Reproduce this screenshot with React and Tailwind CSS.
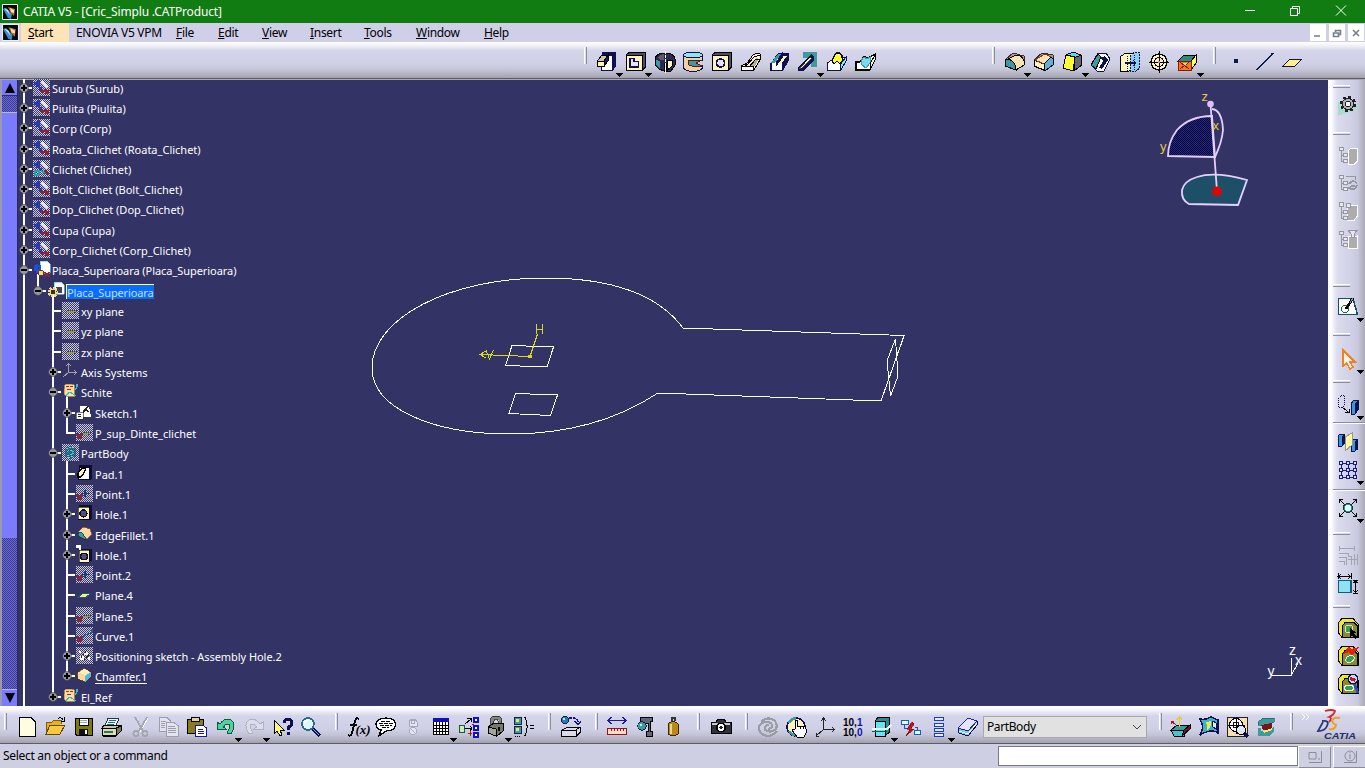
import React from "react";

const N = "#101050";
const C = "#fff3c0";
const T = "#3d9a9e";

/* ---------- toolbar drawings, 22 x 22 grid ---------- */
const art = {
  pad: (
    <>
      <path d="M6 1H20V15L17 20H6Z" fill={N} />
      <path d="M8 5L10 4H16.500V19.500H5V15Z" fill="#fff" stroke={N} />
      <path d="M1.500 10L6 4H12L8 10Z" fill="#cfc89c" stroke="#000" />
      <path d="M1.500 10H8V15.500H1.500Z" fill={C} stroke="#000" />
      <path d="M8 10L12 4V10L8 15Z" fill="#1b1b66" stroke="#000" />
    </>
  ),
  pocket: (
    <>
      <path d="M1 4L4 1.500H20.500V16L17 19.500" fill="#50505c" stroke="#000" />
      <path d="M1.500 4.500H17.500V19.500H1.500Z" fill={C} stroke="#000" strokeWidth="1.400" />
      <path d="M5 7.500H9V10.500H13.500V16H5Z" fill="#e4e4f4" stroke={N} strokeWidth="1.600" />
    </>
  ),
  shaft: (
    <>
      <path d="M1 8Q2 2 11 2Q20 2 21 8V14L17 20H12V12H10V20L5 18L1 14Z" fill="#2a2a50" stroke="#000" />
      <path d="M4 6Q7 3 10 3V9L6 9Z" fill="#5c5c68" />
      <path d="M2 9L6 10V18L2 14Z" fill={T} />
      <path d="M13.500 9H18V15L13.500 19Z" fill={C} stroke="#000" />
      <path d="M11 0V22" stroke="#fff" strokeDasharray="3 1" />
    </>
  ),
  groove: (
    <>
      <path d="M1.500 4V17Q4 20.500 11 20.500T20.500 17V14H10V9H20.500V4Z" fill="#f4cfa0" stroke={N} />
      <ellipse cx="11" cy="4" rx="9.500" ry="2.800" fill="#8fe4f4" stroke={N} />
      <path d="M20 9H9Q6 9 6 12T10 15H20L14 12Z" fill={T} stroke="#5a1a1a" />
    </>
  ),
  hole: (
    <>
      <path d="M1 4L4 1.500H20.500V16L17 19.500" fill="#50505c" stroke="#000" />
      <path d="M1.500 4.500H17.500V19.500H1.500Z" fill={C} stroke="#000" strokeWidth="1.400" />
      <circle cx="9.500" cy="12" r="4" fill="#e4e4f4" stroke={N} strokeWidth="1.700" />
    </>
  ),
  rib: (
    <>
      <path d="M1 15L5 13V15L13 4Q16 2 20 3V9L14 19H1Z" fill={C} stroke="#000" />
      <path d="M9 16L16 7L19 8L14 16Z" fill="#b3ad8d" />
      <path d="M6 15L14 6L20 4M9 16L16 8H20" fill="none" stroke="#000" />
      <path d="M1 15.500H13.500V19.500H1Z" fill="#fff" stroke="#000" />
    </>
  ),
  slot: (
    <>
      <path d="M1 13L9 2H20V9L14 20H1Z" fill={N} />
      <path d="M2 13L9 3L13 2L7 12V15L15 4H19L13 13V19H2Z" fill="#fff" stroke={N} />
      <path d="M2 12L9 3L12 3L6 12Z" fill={T} />
      <path d="M9 13L15 5H18L12 13Z" fill={C} />
    </>
  ),
  stiffener: (
    <>
      <path d="M6 1H20V16H14V7H6Z" fill={T} />
      <path d="M1 17L14 3L17 5V9L6 20H1Z" fill={N} />
      <path d="M2.500 17.500L13 6L15 7L4.500 18Z" fill={C} stroke="#000" strokeWidth=".7" />
    </>
  ),
  loft: (
    <>
      <path d="M1 12L6 9L9 3Q12 0 15 3L17 6H20V10L15 19H1Z" fill="#fff" stroke={N} />
      <path d="M6 10L9 4Q12 0 15 4L17 9L14 13L11 10L8 13Z" fill="#ffff30" stroke="#000" />
      <path d="M14 14L20 6V10L15 19Z" fill="#8fe4f4" stroke={N} />
    </>
  ),
  removeLoft: (
    <>
      <path d="M1 11H5L9 5L13 7L18 4H20V9L15 19H1Z" fill="#fff" stroke="#000" strokeWidth="1.300" />
      <path d="M6 10L9 6L12 8L15 6V12L11 17L7 14Z" fill="#7adcf0" stroke={T} />
      <path d="M15 13L20 4V9L15 19Z" fill={C} stroke="#000" />
    </>
  ),
  fillet: (
    <>
      <path d="M1 9L9 2L20 5V14L12 19L1 15Z" fill="#b49a90" stroke="#3a2a2a" />
      <path d="M4 8L12 4Q18 4 20 10V14L12 19Q12 10 4 8Z" fill="#fbe2b0" stroke="#000" />
      <path d="M1 9Q11 7 12 19L1 15Z" fill={T} stroke="#000" />
    </>
  ),
  chamfer: (
    <>
      <path d="M1 9L9 2L20 4V14L12 20L1 15Z" fill="#a89a94" stroke="#3a2a2a" />
      <path d="M1 9L11 13V19L1 15Z" fill={C} stroke="#000" />
      <path d="M2 9L12 3L18 6L11 13Z" fill="#fbe2b0" stroke="#7a3a2a" />
      <path d="M11 13L18 6L20 8V14L12 20Z" fill="#5ab4dc" stroke="#000" />
    </>
  ),
  draft: (
    <>
      <path d="M12 6L19 4L20 14L12 20Z" fill="#66666e" stroke="#000" />
      <path d="M4 4L11 1L19 4L12 7Z" fill="#5ad8ee" stroke="#000" />
      <path d="M4 4L13 6L11 20L1 17Z" fill="#ffff30" stroke="#000" />
    </>
  ),
  shell: (
    <>
      <path d="M1 14L8 2H16L20 8L14 20H7Z" fill="#fff" stroke={N} />
      <path d="M1 14L8 3L11 6L6 18Z" fill={T} stroke="#000" />
      <path d="M10 7L15 5L18 9L12 18L9 17L13 10Z" fill={N} />
    </>
  ),
  thick: (
    <>
      <path d="M1.500 5.500L6 2.500H13V18L9 20.500H1.500Z" fill={C} stroke="#000" />
      <path d="M11 5L15 1.500H20.500V17L17 20H11Z" fill="#8ed0ee" stroke={N} strokeDasharray="2 1" />
      <path d="M8.500 5V20M15 4V19" stroke={N} strokeDasharray="1 1" />
      <path d="M6 12H17M14 9L17 12L14 15" fill="none" stroke={N} strokeWidth="1.400" />
    </>
  ),
  thread: (
    <>
      <circle cx="11" cy="11" r="8" fill={C} stroke="#000" strokeWidth="1.400" />
      <circle cx="11" cy="11" r="4.500" fill="none" stroke="#000" />
      <path d="M11 0V22M1 11H21" stroke="#000" />
      <circle cx="11" cy="11" r="1.500" fill="#c88" />
    </>
  ),
  replace: (
    <>
      <path d="M1 10L7 4H19L14 10Z" fill="#2d8a7e" stroke="#000" />
      <path d="M14 10L19 4V12L14 19Z" fill="#ffff60" stroke="#000" />
      <path d="M1 10H14V19H1Z" fill="#f07a20" stroke="#8a1a00" />
      <path d="M3 11L12 18M12 11L3 18" stroke="#8a1a00" />
      <path d="M5 12H10L8 14Z" fill="#ffe070" />
    </>
  ),
  point: <path d="M9 8H13V12H9Z" fill="#0a1a4a" />,
  line: <path d="M3 19L19 2" stroke="#0a1a4a" strokeWidth="1.500" />,
  plane: <path d="M1 15L8 8H20L13 15Z" fill="#fff08a" stroke={N} />,

  newDoc: <path d="M3.500 1.500H15L19.500 6V20.500H3.500Z" fill="#fffde0" stroke="#000" />,
  open: (
    <>
      <path d="M2 18V6H8L10 4H17V8" fill="#e8b020" stroke="#806000" />
      <path d="M2 18L6 9H21L16 18Z" fill="#f8ca40" stroke="#604800" />
      <path d="M14 3Q17 0 19 4M20 1V5H17" fill="none" stroke="#000" />
    </>
  ),
  save: (
    <>
      <path d="M2.500 2.500H19.500V19.500H4L2.500 18Z" fill="#7f7a10" stroke="#000" />
      <path d="M6 2.500H15.500V9.500H6Z" fill="#fff" stroke="#000" />
      <path d="M7 4.500H14M7 6.500H14" stroke="#9ab" />
      <path d="M6 13H15V19H6Z" fill="#111" />
      <path d="M12 14H14V18H12Z" fill="#fff" />
    </>
  ),
  print: (
    <>
      <path d="M7 2H18L15 10H4Z" fill="#e8f8ff" stroke="#234" />
      <path d="M8 4.500H15M7 6.500H14M6 8.500H13" stroke="#268" />
      <path d="M1 11L4 9H19L20 10V15L15 20H2Z" fill="#c8c69a" stroke="#000" />
      <path d="M1 12.500H15V19.500H2Z" fill="#dedcb0" stroke="#000" />
      <path d="M3 15H12V17H3Z" fill="#2a7a4a" />
      <path d="M15 12L20 10V15L15 20Z" fill="#7c7a50" stroke="#000" />
    </>
  ),
  cut: (
    <g fill="none" stroke="#a6a6b2" strokeWidth="1.800">
      <path d="M6 2L14 16M18 2L10 16" stroke="#fff" strokeWidth="1" />
      <path d="M5 1L13 15M17 1L9 15" />
      <circle cx="6" cy="17.500" r="2.600" />
      <circle cx="15" cy="17.500" r="2.600" />
    </g>
  ),
  copy: (
    <g fill="#e2e2f0" stroke="#9d9dab">
      <path d="M1.500 1.500H9L12.500 5V15.500H1.500Z" />
      <path d="M3 5.500H8M3 7.500H7M3 9.500H7M3 11.500H7" />
      <path d="M8.500 6.500H16L20.500 10V20.500H8.500Z" />
      <path d="M10 10.500H17M10 12.500H18M10 14.500H18M10 16.500H18" />
    </g>
  ),
  paste: (
    <>
      <path d="M1.500 3.500H17.500V17.500H1.500Z" fill="#8c7a1e" stroke="#000" />
      <path d="M5.500 1.500H13.500V5.500H5.500Z" fill="#ddd7a0" stroke="#000" />
      <path d="M9.500 9.500H17L20.500 12V20.500H9.500Z" fill="#fff" stroke="#1a1a90" />
      <path d="M12 13.500H17M12 15.500H18M12 17.500H18" stroke="#1a1a90" />
    </>
  ),
  undo: <path d="M2 6L5 8Q10 1 16 4Q22 8 16 18L12 17Q17 9 13 8Q10 8 8.500 11L11 13H2Z" fill="#4fd39c" stroke="#0e5a3c" />,
  redo: <path d="M20 6L17 8Q12 1 6 4Q0 8 6 18L10 17Q5 9 9 8Q12 8 13.500 11L11 13H20Z" fill="#dcdcec" stroke="#b0b0c0" />,
  help: (
    <>
      <path d="M2 4V18L5 15L8 20L10 19L8 14H12Z" fill="#ffff70" stroke="#000" />
      <path d="M12 7Q12 3.500 16 3.500T20 7Q20 10 16 11.500V14" fill="none" stroke={N} strokeWidth="3" />
      <path d="M14.500 16H17.500V19H14.500Z" fill={N} />
    </>
  ),
  find: (
    <>
      <path d="M12 12L20 20" stroke={N} strokeWidth="3.400" />
      <path d="M12.500 12.500L19 19" stroke="#6bb8e8" strokeWidth="1.200" />
      <circle cx="8" cy="8" r="6" fill="#dff6ff" stroke="#2a6a8a" strokeWidth="1.600" />
      <path d="M5 7Q6 4 9 4" fill="none" stroke="#fff" strokeWidth="2" />
    </>
  ),
  formula: (
    <>
      <path d="M12 3Q9 1 8 5L5 17Q4 21 1 19M3 9H10" fill="none" stroke="#000" strokeWidth="1.900" />
      <text x="8.500" y="18" fontFamily="Liberation Serif, serif" fontStyle="italic" fontWeight="bold" fontSize="13">(x)</text>
    </>
  ),
  comment: (
    <>
      <path d="M11 2C16 2 20.500 4 20.500 8.500S16 15 11 15L4 20L6 14C3 13 1 11 1 8S5 2 11 2Z" fill="#fff" stroke="#000" strokeWidth="1.300" />
      <path d="M6 5.500H16M4 7.500H18M5 9.500H17M7 11.500H14" stroke="#000" strokeDasharray="4 1" />
    </>
  ),
  lamps: (
    <g fill="#e6e6f2" stroke="#a8a8b8">
      <path d="M9 3H13L15 6V10H7V6Z" />
      <circle cx="11" cy="6" r="2" />
      <circle cx="11" cy="15" r="3.500" />
      <path d="M9 13L13 17" />
    </g>
  ),
  table: (
    <>
      <path d="M3 3H19V19H3Z" fill="#fff" />
      <path d="M3 2H19V6H3Z" fill="#1010c0" />
      <path d="M3.500 6V18.500H18.500V6M3 9.500H19M3 12.500H19M3 15.500H19M6.500 6V19M9.500 6V19M12.500 6V19M15.500 6V19" fill="none" stroke="#000" />
    </>
  ),
  equiv: (
    <>
      <path d="M1.500 9.500H6V16H1.500Z" fill="#c8f0a8" stroke="#155" />
      <g fill="#fff" stroke="#1010c0" strokeWidth="1.300"><path d="M16 2H20V6H16ZM16 10H20V14H16ZM16 17H20V21H16Z" /></g>
      <path d="M7 8L13 3M9 2.500H13.500V6M7 12.500H14M12 10L14 12L12 15" fill="none" stroke="#000" />
      <path d="M10 17.500H14M12 15V20M14 8H16" stroke="#c01010" />
    </>
  ),
  lock: (
    <>
      <path d="M7 9V4Q7 1.500 11 1.500T15 4V9" fill="none" stroke="#85857c" strokeWidth="3" />
      <path d="M5.500 9V4Q6 0 11 0T16.500 4V9M8.500 8V5Q9 3 11 3T13.500 5V8" fill="none" stroke="#222" strokeWidth=".8" />
      <path d="M3 11L9 7H18V15L12 20L3 17Z" fill="#77776a" stroke="#000" />
      <path d="M3 11L11 13V20L3 17Z" fill="#a4a494" stroke="#000" />
      <path d="M14 11V15" stroke="#000" strokeWidth="2" />
    </>
  ),
  relations: (
    <>
      <g stroke="#124" fill={T}><path d="M1.500 1.500H8.500V8.500H1.500ZM1.500 10.500H8.500V17.500H1.500Z" /></g>
      <path d="M3 3H6V6H3ZM3 12H6V15H3Z" fill="#f4e070" />
      <path d="M2 20.500H8" stroke="#000" strokeDasharray="1 1" />
      <path d="M11 1Q13 1 13 4V8L15 11L13 13V17Q13 20 11 20M17 9.500H21M17 12.500H21" fill="none" stroke="#000" />
    </>
  ),
  convert: (
    <>
      <circle cx="5" cy="4" r="3.700" fill="#2a7ab0" stroke="#024" />
      <circle cx="4" cy="3" r="1.200" fill="#bfe8ff" />
      <path d="M9 2H14Q18 2 18 7" fill="none" stroke="#1010a0" strokeWidth="1.400" strokeDasharray="3 1" />
      <path d="M15 5L18 8.500L21 5" fill="none" stroke="#1010a0" strokeWidth="1.400" />
      <path d="M1.500 14.500L7 11.500H20.500V16L16 20.500H1.500Z" fill="#dcdcec" stroke="#000" />
      <path d="M2 14.500H16V20M16 14L20 11" fill="none" stroke="#000" />
    </>
  ),
  measure: (
    <>
      <path d="M2 4.500H20M6 1L2 4.500L6 8M16 1L20 4.500L16 8" fill="none" stroke="#1a1aa0" strokeWidth="1.300" />
      <path d="M1.500 12.500H20.500V18.500H1.500Z" fill="#ffd8c8" stroke="#8a1a1a" />
      <path d="M5.500 12V15M8.500 12V15M11.500 12V15M14.500 12V15M17.500 12V15" stroke="#8a1a1a" />
    </>
  ),
  clamp: (
    <>
      <path d="M6 1.500H18.500V5H16V15H18.500V20.500H12V15H14V7H6Z" fill="#66667a" stroke="#000" />
      <circle cx="8" cy="10" r="4.200" fill={T} stroke="#023" />
      <circle cx="7" cy="9" r="1.500" fill="#cfe" />
    </>
  ),
  mass: (
    <>
      <path d="M9.500 5V1.500H12.500V5" fill="none" stroke="#333" strokeWidth="2" />
      <path d="M6 8Q11 3 16 8V18Q11 22 6 18Z" fill="#b88a1e" stroke="#3a2a00" />
      <path d="M8.500 8V18" stroke="#f2d878" strokeWidth="2" />
    </>
  ),
  camera: (
    <>
      <path d="M1 6H6L8 3H14L16 6H21V17H1Z" fill="#30303c" stroke="#000" />
      <path d="M2 7H20V9H2Z" fill="#c8c8d0" />
      <circle cx="11" cy="11.500" r="4.200" fill="#fff" stroke="#000" strokeWidth="1.500" />
      <circle cx="11" cy="11.500" r="1.800" fill="#223" />
    </>
  ),
  swirl: (
    <g fill="none" stroke="#9c9ca4" strokeWidth="2.200">
      <path d="M4 6Q10 0 17 4Q22 9 18 14Q13 17 8 14Q7 9 12 9" />
      <path d="M20 15Q13 23 5 18Q-1 12 4 8Q9 4 14 7Q17 12 11 13" />
    </g>
  ),
  hand: (
    <>
      <circle cx="10" cy="11" r="9" fill="#fff4b8" stroke={N} strokeWidth="1.600" />
      <path d="M3 7Q6 2 10 2.500M3 15Q6 19 10 19.500" fill="none" stroke={T} strokeWidth="2.600" />
      <path d="M9 13V4H11.500V10H18Q20 10 20 13V17L18 21H11L6 14Z" fill="#fff" stroke="#000" />
      <path d="M14.500 10V13M17.500 10V13" stroke="#000" />
    </>
  ),
  axis: <path d="M9.500 2V13.500H20M9.500 13.500L2 20M7 5L9.500 2L12 5M18 11L20.500 13.500L18 16M2 17V20.500H5" fill="none" stroke="#222" />,
  dims: (
    <g fontFamily="Liberation Sans, sans-serif" fontSize="10" fontWeight="bold">
      <text x="0" y="9.500" fill="#000">10,<tspan fill="#1010b0">1</tspan></text>
      <text x="0" y="20" fill="#000">10,<tspan fill="#1010b0">0</tspan></text>
    </g>
  ),
  section: (
    <>
      <path d="M4 5L7 1.500H18.500V16L14 20H4Z" fill="#2a8a90" stroke="#000" />
      <path d="M4 5.500H14.500V20.500H4Z" fill="#6ae2f2" stroke="#000" />
      <path d="M1 13H16L20 9" fill="none" stroke="#e8ffff" strokeWidth="2" />
      <path d="M1 15.500H16" stroke="#156" />
    </>
  ),
  update: (
    <>
      <path d="M1.500 4H8V8H1.500ZM14 14H20.500V18H14Z" fill="#dff" stroke="#1a5ac0" />
      <path d="M4.500 8V12H8M17.500 14V11.500H15" fill="none" stroke="#1a5ac0" />
      <path d="M12 6L7 13H10L6 20L14 13H11L14 8Z" fill="#d01010" stroke="#600" strokeWidth=".6" />
    </>
  ),
  stack: <path d="M6.500 1.500H15.500V4.500H6.500ZM6.500 7.500H15.500V10.500H6.500ZM6.500 12.500H15.500V15.500H6.500ZM6.500 17.500H15.500V20.500H6.500Z" fill="#e4ecff" stroke="#1a3ac0" />,
  book: (
    <>
      <path d="M1 13L11 2L20 5V9L11 20L2 17Z" fill="#7cc8ee" stroke={N} />
      <path d="M1 12L11 2L20 5L11 15Z" fill="#e4e4fa" stroke="#1a2a90" />
      <path d="M2 15L11 18L20 7" fill="none" stroke="#fff" />
    </>
  ),
  sketchPos: (
    <>
      <path d="M1 14L7 9H20L14 14Z" fill={T} stroke="#000" />
      <path d="M1 14.500H14V20H4Z" fill="#48c4d0" stroke="#000" />
      <path d="M14 14L20 9V13L12 20Z" fill="#7a1020" stroke="#000" />
      <path d="M9.500 11V1M7 4L9.500 1L12 4" fill="none" stroke="#e0d020" strokeWidth="1.400" />
      <path d="M6 9L1 5M1.500 8V5H4" fill="none" stroke="#b01010" />
    </>
  ),
  surface: (
    <>
      <path d="M2 3Q9 4 13 1L20 4V17Q14 12 2 19Q7 11 2 3Z" fill="#3ab4c8" stroke={N} strokeWidth="1.400" />
      <path d="M8 6Q12 6 13 4Q14 10 9 15Q10 10 8 6Z" fill="#eee850" />
      <path d="M15 5L18 7V13Q15 11 14 10Z" fill="#c8f4ff" stroke={N} />
    </>
  ),
  target: (
    <>
      <path d="M.5 1.500H20.500V20.500H.5Z" fill="#f8dfb0" stroke="#222" />
      <circle cx="9" cy="9" r="6.500" fill="#fff" stroke="#000" />
      <circle cx="9" cy="9" r="3" fill="none" stroke={N} />
      <path d="M9 1V18M1 9H18" stroke="#000" />
      <path d="M17 17L21 21" stroke={N} strokeWidth="3" />
      <circle cx="14" cy="14" r="4.500" fill="#dfe8f4" stroke="#000" />
    </>
  ),
  beam: (
    <>
      <path d="M3 6L8 2H19V6L14 9H3Z" fill={T} stroke="#155" strokeWidth=".6" />
      <path d="M6 9L17 7V13L8 14Z" fill="#7a1418" />
      <path d="M3 12H6V15L15 14L19 11V15L14 20H3Z" fill={T} />
      <path d="M8 15L17 12V14L9 17Z" fill="#f6ee60" />
    </>
  ),

  gear: (
    <>
      <path d="M1 8L10 6L23 14L1 22Z" fill="#a9dccb" />
      <circle cx="11" cy="10" r="7" fill="none" stroke="#222" strokeWidth="2.500" strokeDasharray="3 2.500" />
      <circle cx="11" cy="10" r="5.700" fill="#b4b4b4" stroke="#222" />
      <circle cx="11" cy="10" r="2.700" fill="#f4f4f8" stroke="#222" />
    </>
  ),
  grayTree: (
    <>
      <path d="M11 7L14 4H20.500V17L17 20.500H11Z" fill="#adadad" stroke="#fff" />
      <path d="M2.500 3.500H6.500V6.500H2.500ZM6.500 9.500H10.500V12.500H6.500ZM6.500 15.500H10.500V18.500H6.500Z" fill="#e8e8f4" stroke="#96969e" />
      <path d="M4.500 6V17H6M4.500 11H6" fill="none" stroke="#96969e" />
    </>
  ),
  grayTree2: (
    <>
      <path d="M2.500 3.500H6.500V6.500H2.500ZM6.500 9.500H10.500V12.500H6.500ZM6.500 15.500H10.500V18.500H6.500Z" fill="#e8e8f4" stroke="#96969e" />
      <path d="M4.500 6V17H6M4.500 11H6M9 4.500H18V8" fill="none" stroke="#96969e" />
      <path d="M12 12Q15 7 20 11M20 13Q18 20 12 16L15 14L18 14" fill="none" stroke="#96969e" strokeWidth="1.800" />
    </>
  ),
  grayTree3: (
    <>
      <path d="M10 9L13 5H20.500V16L17 20.500H10Z" fill="#adadad" stroke="#fff" />
      <path d="M2.500 2.500H6.500V6.500H2.500ZM9.500 3.500H13.500V7.500H9.500ZM6.500 10.500H10.500V13.500H6.500ZM6.500 16.500H10.500V19.500H6.500Z" fill="#e8e8f4" stroke="#96969e" />
      <path d="M4.500 6V18H6M4.500 12H6" fill="none" stroke="#96969e" />
    </>
  ),
  grayTree4: (
    <>
      <path d="M11 9V20.500H20.500V8Z" fill="#adadad" stroke="#fff" />
      <path d="M11 2H20.500L17 6V9H14V6Z" fill="#e8e8f4" stroke="#96969e" />
      <path d="M2.500 3.500H6.500V6.500H2.500ZM6.500 9.500H10.500V12.500H6.500ZM6.500 15.500H10.500V18.500H6.500Z" fill="#e8e8f4" stroke="#96969e" />
      <path d="M4.500 6V17H6M4.500 11H6" fill="none" stroke="#96969e" />
    </>
  ),
  sketch: (
    <>
      <path d="M1.500 2.500H16L20.500 18.500H1.500Z" fill="#fff" stroke="#15506a" strokeWidth="1.500" />
      <circle cx="8" cy="13" r="3.500" fill="none" stroke="#1a6a4a" />
      <path d="M9 13L16 2" stroke="#000" strokeWidth="2.600" />
      <path d="M13 7L16 2" stroke="#79a" strokeWidth="1" />
    </>
  ),
  arrow: <path d="M6 2V18L9.500 15L13 21L16 19L13 14H18Z" fill="#fbf0ea" stroke="#f08020" strokeWidth="1.600" />,
  translate: (
    <>
      <path d="M1.500 4.500L4 1.500H7.500V11L5 13.500H1.500Z" fill="none" stroke={N} strokeDasharray="1 1" />
      <path d="M6 14L11 17.500M8 18.500H12V15" fill="none" stroke="#000" />
      <path d="M14.500 9L17 6H21V16L18 20H14.500Z" fill="#3a9ad8" stroke={N} />
      <path d="M18 9L21 6V16L18 20Z" fill={N} />
    </>
  ),
  mirror: (
    <>
      <path d="M1.500 5L3 3H7V13L5 15H1.500Z" fill="#3a9ad8" stroke={N} />
      <path d="M5 5L7 3V13L5 15Z" fill={N} />
      <path d="M14.500 10L16 8H20.500V18L18 20H14.500Z" fill="#3a9ad8" stroke={N} />
      <path d="M8 6L15 2V14L8 20Z" fill="#fbf8a8" stroke="#998" />
      <path d="M18 10L20.500 8V18L18 20Z" fill={N} />
    </>
  ),
  grid: (
    <>
      <path d="M3 4H19M3 11H19M3 18H19M4 3V19M11 3V19M18 3V19" stroke="#1a1a90" />
      <g fill="#dfe2ff" stroke="#1a1a90">
        {[4, 11, 18].map((y) => [4, 11, 18].map((x) => <circle key={x + "-" + y} cx={x} cy={y} r="1.800" />))}
      </g>
    </>
  ),
  scale: (
    <>
      <path d="M3 3L7 7M19 3L15 7M3 19L7 15M19 19L15 15M2.500 6V2.500H6M16 2.500H19.500V6M2.500 16V19.500H6M16 19.500H19.500V16" fill="none" stroke="#000" />
      <circle cx="11" cy="11" r="4.700" fill="#3a8a8a" stroke="#0a3a3a" />
      <circle cx="11" cy="11" r="3" fill="#dffcf0" />
    </>
  ),
  grayDims: <path d="M2 3.500H17M2.500 1V6M17.500 1V6M2 8.500H11.500V11.500H14.500V20M2 12.500H9.500V20M2 16.500H7.500V20M11 14.500H20M17.500 9V20M20.500 9V20" fill="none" stroke="#a4a4ae" />,
  dimBox: (
    <>
      <path d="M1.500 7.500H14V19.500H1.500Z" fill="#8ae4f4" stroke="#155a7a" strokeWidth="1.500" />
      <path d="M1 3.500H14M1.500 0V6M14.500 0V6M4 1.500L1 3.500L4 5.500M11 1.500L14 3.500L11 5.500M18.500 7V20M16 7.500H21M16 20.500H21M16.500 10L18.500 7.500L20.500 10M16.500 17L18.500 20L20.500 17" fill="none" stroke="#000" />
    </>
  ),
  blockCursor: (
    <>
      <path d="M1 6L5 1.500H16L21 7V20.500H5L1 15Z" fill="#f0e820" stroke="#000" />
      <path d="M5.500 9L8 5.500H17L20.500 9V20H5.500Z" fill="#8c8a26" stroke="#000" />
      <circle cx="12" cy="12" r="4" fill="#3a9a5a" stroke="#cfe8cf" />
      <path d="M13 11V20L15 18L18 22L20 20L17 16H20Z" fill="#000" />
    </>
  ),
  blockFlash: (
    <>
      <path d="M1 6L5 1.500H16L21 7V20.500H5L1 15Z" fill="#f0e820" stroke="#000" />
      <path d="M5.500 9L8 5.500H17L20.500 9V20H5.500Z" fill="#8c8a26" stroke="#000" />
      <ellipse cx="13" cy="14" rx="4.500" ry="3.300" fill="#3a9a5a" stroke="#dfe" transform="rotate(-35 13 14)" />
      <path d="M6 9L12 1L14 4L22 2L15 11L12 7Z" fill="#e81c10" />
    </>
  ),
  blockFind: (
    <>
      <path d="M1 6L5 1.500H16L21 7V20.500H5L1 15Z" fill="#f0e820" stroke="#000" />
      <path d="M5.500 9L8 5.500H17L20.500 9V20H5.500Z" fill="#8c8a26" stroke="#000" />
      <ellipse cx="12" cy="15" rx="4.500" ry="3" fill="#3a9a5a" stroke="#dfe" />
      <path d="M17 10L21 20" stroke="#2a4ac0" strokeWidth="2.500" />
      <circle cx="16" cy="6" r="4.500" fill="#c8d8f8" stroke={N} strokeWidth="1.500" />
      <path d="M13 4L19 6L18 9L13 7Z" fill="#c01818" />
    </>
  ),
};

function Icon({ name, menu }) {
  return (
    <svg viewBox="0 0 22 22" className="h-[22px] w-[22px] shrink-0 overflow-visible" fill="#000" shapeRendering="crispEdges">
      {art[name]}
      {menu && <path d="M20 22H27L23.500 26Z" fill="#000" />}
    </svg>
  );
}

function Group({ items, className }) {
  return (
    <div className={"flex shrink-0 items-center justify-between " + className}>
      {items.map((n) => (
        <Icon key={n} name={n.replace("*", "")} menu={n.endsWith("*")} />
      ))}
    </div>
  );
}

const Grip = ({ className }) => (
  <div className={"mb-3 h-[17px] w-[3px] shrink-0 border-r border-l border-l-white border-r-[#8c8c9c] bg-[#dcdcec] " + className} />
);

const HGrip = ({ className }) => (
  <div className={"ml-[5px] h-[3px] w-[17px] shrink-0 border-t border-b border-t-white border-b-[#8c8c9c] " + className} />
);

const Logo = ({ className }) => (
  <svg viewBox="0 0 16 16" className={"shrink-0 " + className}>
    <path d="M.5 .5H15.500V15.500H.5Z" fill="#06080e" stroke="#e8f0e8" />
    <path d="M1 5L4 4L10 10L9 15L6 14Z" fill="#3a8ecc" />
    <path d="M2 4L6 6L8 11Z" fill="#bfe6ff" />
    <path d="M6 3L13 5L12 12L9 9Z" fill="#c8682a" />
    <path d="M8 4L12 6V9L9 8Z" fill="#ffe6c0" />
  </svg>
);

/* ---------- specification tree ---------- */
const treeArt = {
  part: (
    <>
      <path d="M0 0H17V17H0Z" fill="url(#hatch)" />
      <path d="M9 1L15 7L13 9L8 4Z" fill="#fff" fillOpacity=".8" />
      <path d="M1 3H4V1H7V8H3V6H1ZM6 8H9V12H6Z" fill="#1c2ca8" fillOpacity=".85" />
      <path d="M8 11L11 14M12 11L16 15M16 11L12 15" stroke="#8c2236" strokeWidth="1.500" />
    </>
  ),
  partGreen: (
    <>
      <path d="M0 0H17V17H0Z" fill="url(#hatch)" />
      <path d="M9 1L15 7L13 9L8 4Z" fill="#fff" fillOpacity=".8" />
      <path d="M1 3H4V1H7V8H3V6H1ZM6 8H9V11H6Z" fill="#1c2ca8" fillOpacity=".85" />
      <path d="M2 11H6V15H2ZM8 11L12 13" fill="none" stroke="#2aa0a0" strokeWidth="1.500" />
      <path d="M12 11L16 15" stroke="#8c2236" strokeWidth="1.500" />
    </>
  ),
  partOpen: (
    <>
      <path d="M7 0H14L17 3V12H7Z" fill="#fff" stroke="#6ad0d8" strokeWidth=".7" />
      <path d="M2 5H7V9H2ZM4 3V12" fill="none" stroke="#2050d0" strokeWidth="1.600" />
      <circle cx="8" cy="12" r="2.600" fill="#f4d890" stroke="#6a3a10" />
      <path d="M12 11L16 16M16 11L12 16" stroke="#a02030" strokeWidth="1.600" />
    </>
  ),
  gearDoc: (
    <>
      <path d="M6 0H13L16 3V12H6Z" fill="#fff" stroke="#6ad0d8" strokeWidth=".7" />
      <path d="M8 5H14V11H8Z" fill="#445" />
      <circle cx="5" cy="10" r="4" fill="none" stroke="#f4d890" strokeWidth="2.400" strokeDasharray="2 1" />
      <circle cx="5" cy="10" r="2.600" fill="#332" stroke="#f4d890" />
    </>
  ),
  plane: (
    <>
      <path d="M0 0H17V17H0Z" fill="url(#hatch)" />
      <path d="M3 11L6 8H15L12 11Z" fill="#9c9a4a" fillOpacity=".7" stroke="#3a3a50" strokeDasharray="1 1" />
    </>
  ),
  planeX: (
    <>
      <path d="M0 0H17V17H0Z" fill="url(#hatch)" />
      <path d="M5 11L8 8H15L12 11Z" fill="#9c9a4a" fillOpacity=".7" stroke="#3a3a50" strokeDasharray="1 1" />
      <path d="M1 10L6 15M6 10L1 15" stroke="#8c2236" strokeWidth="1.500" />
    </>
  ),
  pointX: (
    <>
      <path d="M0 0H17V17H0Z" fill="url(#hatch)" />
      <path d="M9 5V12M6 8.500H13" stroke="#1a3a7a" strokeWidth="1.500" />
      <path d="M1 10L6 15M6 10L1 15" stroke="#8c2236" strokeWidth="1.500" />
    </>
  ),
  curve: (
    <>
      <path d="M0 0H17V17H0Z" fill="url(#hatch)" />
      <path d="M6 14Q7 8 12 7T16 2" fill="none" stroke="#2a5a90" strokeWidth="1.300" />
      <path d="M1 10L6 15M6 10L1 15" stroke="#8c2236" strokeWidth="1.500" />
    </>
  ),
  axis: <path d="M6.500 1V9.500H14M6.500 9.500L1 14M4 3L6.500 1L9 3M12 7L14.500 9.500L12 12" fill="none" stroke="#a8a0a8" />,
  set: (
    <>
      <path d="M3 2Q7 0 12 2V8L13 13H4L2 11Z" fill="#fbdf9c" stroke="#c8964a" strokeWidth=".8" />
      <path d="M4 3.500H7M8 3.500H11M5 6.500H9" stroke="#c02020" />
      <path d="M3 13L8 9L14 13M15 1V4L13 7" fill="none" stroke="#38b8d0" strokeWidth="1.300" />
    </>
  ),
  sketch: (
    <>
      <path d="M4 2H13L15 13H4Z" fill="#fff" />
      <path d="M7 9L12 2M7 7Q10 4 12 8" stroke="#222" strokeWidth="1.500" fill="none" />
      <path d="M0 8H7V15H0Z" fill="#fff" stroke="#222" strokeWidth=".6" />
      <path d="M2 10.500H5M2 12.500H5" stroke="#222" />
    </>
  ),
  body: (
    <>
      <path d="M0 0H17V17H0Z" fill="url(#hatch)" />
      <path d="M3 4L8 2L14 5V12L9 15L3 12Z" fill="#1a5a7a" fillOpacity=".75" />
      <path d="M4 5Q8 2 13 5M5 8Q8 5 12 8M5 12L12 9M6 14L12 12" fill="none" stroke="#4ad8d8" strokeDasharray="2 1" />
    </>
  ),
  pad: (
    <>
      <path d="M3 0H16V13L14 15H2Z" fill="#0c0c34" />
      <path d="M4 3H13V14H3Z" fill="#fff" />
      <path d="M2 8L6 3H10L8 8L5 12H2Z" fill={C} stroke="#000" strokeWidth="1.300" />
    </>
  ),
  hole: (
    <>
      <path d="M3 0H16V13L14 15H2Z" fill="#10102c" />
      <path d="M2 2H13V14H2Z" fill={C} stroke="#000" strokeWidth=".6" />
      <circle cx="7.500" cy="8.500" r="3.500" fill="#50507a" stroke="#10102c" strokeWidth="1.400" />
    </>
  ),
  holeSub: (
    <>
      <path d="M3 3H16V15H3Z" fill="#10102c" />
      <path d="M3 4H13V16H3Z" fill={C} stroke="#000" strokeWidth=".6" />
      <circle cx="8" cy="10.500" r="3.300" fill="#50507a" stroke="#10102c" strokeWidth="1.400" />
      <path d="M0 -1H5V4H3V2H0Z" fill="#fff" />
    </>
  ),
  fillet: (
    <>
      <path d="M2 6L7 1L14 3L16 8L11 13Z" fill="#fbd8a0" stroke="#a04a20" strokeWidth=".8" />
      <path d="M2 6Q8 5 10 14L2 10Z" fill={T} stroke="#023" strokeWidth=".6" />
    </>
  ),
  planeOn: <path d="M2 11.500L7 7H15L10 11.500Z" fill="#f8f080" stroke="#1a5a6a" />,
  posSketch: (
    <>
      <path d="M0 0H17V17H0Z" fill="url(#hatch)" />
      <path d="M3 4H5V6H3ZM8 5H12V8H8ZM4 9H8V13H4ZM12 10H14V13H12Z" fill="#fff" />
      <path d="M5 11L10 4M8 13L14 6" stroke="#222" strokeDasharray="2 1" />
    </>
  ),
  chamfer: (
    <>
      <path d="M1 6L8 1L15 5V10L9 15L2 12Z" fill="#fbd8a0" stroke="#503010" strokeWidth=".8" />
      <path d="M9 9L15 5V10L9 15Z" fill="#5ab4dc" />
      <path d="M3 6L8 2L14 5L9 8Z" fill="#fff0c0" />
    </>
  ),
};

// guides: one character per level. | passes through, T branches, L ends a branch,
// + and - are nodes (p and m when the branch ends there), . is empty.
const tree = [
  ["+", "part", "Surub (Surub)"],
  ["+", "part", "Piulita (Piulita)"],
  ["+", "part", "Corp (Corp)", "", "tall"],
  ["+", "part", "Roata_Clichet (Roata_Clichet)"],
  ["+", "partGreen", "Clichet (Clichet)"],
  ["+", "part", "Bolt_Clichet (Bolt_Clichet)"],
  ["+", "part", "Dop_Clichet (Dop_Clichet)", "", "tall"],
  ["+", "part", "Cupa (Cupa)"],
  ["+", "part", "Corp_Clichet (Corp_Clichet)"],
  ["-", "partOpen", "Placa_Superioara (Placa_Superioara)", "", "tall"],
  ["|m", "gearDoc", "Placa_Superioara", "sel"],
  ["|.T", "plane", "xy plane"],
  ["|.T", "plane", "yz plane", "", "tall"],
  ["|.T", "plane", "zx plane"],
  ["|.+", "axis", "Axis Systems"],
  ["|.-", "set", "Schite", "", "tall"],
  ["|.|+", "sketch", "Sketch.1"],
  ["|.|L", "planeX", "P_sup_Dinte_clichet"],
  ["|.-", "body", "PartBody", "", "tall"],
  ["|.|T", "pad", "Pad.1"],
  ["|.|T", "pointX", "Point.1"],
  ["|.|+", "hole", "Hole.1", "", "tall"],
  ["|.|+", "fillet", "EdgeFillet.1"],
  ["|.|+", "holeSub", "Hole.1"],
  ["|.|T", "pointX", "Point.2"],
  ["|.|T", "planeOn", "Plane.4", "", "tall"],
  ["|.|T", "planeX", "Plane.5"],
  ["|.|T", "curve", "Curve.1"],
  ["|.|+", "posSketch", "Positioning sketch - Assembly Hole.2"],
  ["|.|p", "chamfer", "Chamfer.1", "active", "tall"],
  ["|.p", "set", "El_Ref"],
];

function Guide({ kind, wide }) {
  const half = "Lpm".includes(kind);
  const line = kind !== ".";
  const tick = "TL+-pm".includes(kind);
  const node = "+-pm".includes(kind);
  const plus = "+p".includes(kind);
  return (
    <svg viewBox="0 0 14 20" className={"h-5 shrink-0 overflow-visible " + (wide ? "mr-px w-[14px]" : "w-[14px]")}>
      {line && <path d={half ? "M7 0V10" : "M7 0V21"} stroke="#fff" strokeWidth="2" />}
      {tick && <path d="M7 9H15" stroke="#fff" strokeWidth="2" />}
      {node && <circle cx="7" cy="9" r="4.400" fill="#96969e" stroke="#3a3a44" strokeWidth=".6" />}
      {node && <path d={plus ? "M4 9H10M7 6V12" : "M4 9H10"} stroke="#000" strokeWidth="2" />}
    </svg>
  );
}

function TreeRow({ row }) {
  const [guides, icon, label, mode, size] = row;
  const opens = "-m".includes(guides[guides.length - 1]);
  return (
    <div className={"flex shrink-0 items-start " + (size === "tall" ? "h-[21px]" : "h-[20px]")}>
      {guides.split("").map((g, i) => (
        <Guide key={i} kind={g} wide={i === 1} />
      ))}
      <svg viewBox="0 0 17 17" className="mr-[2px] ml-[2px] h-[17px] w-[17px] shrink-0 overflow-visible" shapeRendering="crispEdges">
        {opens && <path d="M5 13V21" stroke="#fff" strokeWidth="2" />}
        {treeArt[icon]}
      </svg>
      {mode === "sel" ? (
        <span className="mt-[2px] -ml-px h-[15px] border-t border-l border-white bg-[#0a6cff] leading-[15px] tracking-[-0.120px] text-[#bfe0ff]">{label}</span>
      ) : mode === "active" ? (
        <span className="mt-[2px] h-[15px] border-b border-white leading-[16px]">{label}</span>
      ) : (
        <span className={"leading-[20px] " + (label.length > 30 ? "tracking-[-0.060px]" : "")}>{label}</span>
      )}
    </div>
  );
}

const hatchBg =
  "bg-[conic-gradient(#6a6ae0_25%,#3c3c86_0_50%,#6a6ae0_0_75%,#3c3c86_0)] bg-[length:2px_2px]";

const barBg =
  "bg-[linear-gradient(to_bottom,#fff_0,#f4f4fa_3px,#d4d4ea_9px,#cfcfe6_22px,#c4c4d8_28px,#a2a2ae_36px)]";

const menu = [
  ["w-[42px]", "F", "ile"],
  ["w-[44px]", "E", "dit"],
  ["w-[48px]", "V", "iew"],
  ["w-[54px]", "I", "nsert"],
  ["w-[52px]", "T", "ools"],
  ["w-[68px]", "W", "indow"],
  ["w-[60px]", "H", "elp"],
];

function Scene() {
  return (
    <svg viewBox="320 80 1008 626" className="h-[626px] min-w-0 flex-1" fill="none" fontFamily="Liberation Sans, sans-serif">
      <g stroke="#fff" strokeWidth="1" shapeRendering="crispEdges">
        <path d="M683 328C660 297 615 278 545 278C450 278 372 318 372 368C372 408 432 434 510 434C570 434 620 418 658 393L881 401L904 335.500Z" />
        <path d="M512 345.500L553.500 347L547 367L505.500 365.500ZM515.500 393.500L557.500 395L550.500 415.500L509 413.500Z" />
        <path d="M895.500 339L887 361L890.500 396L898 376ZM904 336L887 384" />
      </g>
      <g stroke="#d8d820" shapeRendering="crispEdges">
        <path d="M480 354.500L530 356.500L537.500 334M486 351L480 354.500L486 358M486 350L489.500 359L493.500 350M536.500 324V334M542.500 324V334M536.500 329H542.500" />
        <path d="M528 355H532V358H528Z" fill="#d8d820" stroke="none" />
      </g>
      <path d="M1212 116Q1190 116 1177 130Q1168 142 1168 156L1215 157Z" fill="url(#navyHatch)" stroke="#e6d0ff" strokeWidth="1.800" />
      <path d="M1212 109Q1222 110 1223 130Q1222 142 1215 157" stroke="#e6d0ff" strokeWidth="1.800" />
      <path d="M1182 190Q1184 181 1197 177Q1215 171 1247 180L1238 205L1189 204Q1181 200 1182 190Z" fill="#1d4f68" stroke="#e6d0ff" strokeWidth="1.800" />
      <path d="M1210.500 104L1217 191" stroke="#e6d0ff" strokeWidth="1.800" />
      <circle cx="1210.500" cy="104" r="3.300" fill="#e0c0ff" />
      <path d="M1213 188H1221V195H1213Z" fill="#d80808" />
      <circle cx="1217" cy="191.500" r="5" fill="#d80808" />
      <g fill="#e8c840" fontSize="13">
        <text x="1201.500" y="101">z</text>
        <text x="1160" y="151">y</text>
        <text x="1212.500" y="130" fontSize="13">x</text>
      </g>
      <path d="M1291.500 658V675.500H1272M1291.500 675L1298 663" stroke="#fff" shapeRendering="crispEdges" />
      <g fill="#fff" fontSize="14">
        <text x="1289" y="655">z</text>
        <text x="1295" y="665">x</text>
        <text x="1267.500" y="676">y</text>
      </g>
    </svg>
  );
}

function StatusButton({ children }) {
  return (
    <div className="flex h-[21px] w-[32px] shrink-0 items-center justify-center border-t border-l border-white bg-[#cfcfe4] shadow-[1px_1px_0_#8a8a98]">
      <svg viewBox="0 0 16 14" className="h-[14px] w-4" fill="none" stroke="#8c8c9a">
        {children}
      </svg>
    </div>
  );
}

export default function App() {
  return (
    <div className="flex h-[779px] w-[1365px] flex-col overflow-hidden bg-white font-['Noto_Sans','Open_Sans',sans-serif] text-black">
      <svg className="absolute h-0 w-0">
        <defs>
          <pattern id="hatch" width="2" height="2" patternUnits="userSpaceOnUse">
            <path d="M0 0H2V2H0Z" fill="#3c3c6c" />
            <path d="M0 0H1V1H0ZM1 1H2V2H1Z" fill="#c8c8d8" />
          </pattern>
          <pattern id="navyHatch" width="2" height="2" patternUnits="userSpaceOnUse">
            <path d="M0 0H2V2H0Z" fill="#2c2c60" />
            <path d="M0 0H1V1H0ZM1 1H2V2H1Z" fill="#000058" />
          </pattern>
        </defs>
      </svg>

      <header className="flex h-[23px] shrink-0 items-center bg-[#117c11] pl-[2px] text-white">
        <Logo className="h-4 w-4" />
        <h1 className="ml-[5px] text-[12px] tracking-[-0.160px] whitespace-nowrap">CATIA V5 - [Cric_Simplu .CATProduct]</h1>
        <svg viewBox="1240 0 125 23" className="ml-auto h-[23px] w-[125px]" fill="none" stroke="#fff">
          <path d="M1245 10.500H1255M1290.500 8.500H1297.500V15.500H1290.500ZM1292.500 8V6.500H1299.500V13.500H1298M1336 5.500L1346 15.500M1346 5.500L1336 15.500" />
        </svg>
      </header>

      <nav className="flex h-[19px] shrink-0 items-center bg-[#cfcfe7] pl-px text-[12px] leading-[19px]">
        <Logo className="h-[17px] w-[19px]" />
        <div className="ml-px h-full w-[48px] bg-[#fde3b5] pl-[7px] tracking-[-0.400px]">
          <u>S</u>tart
        </div>
        <div className="w-[107px] pl-[7px] tracking-[-0.300px] whitespace-nowrap">ENOVIA V5 VPM</div>
        {menu.map(([w, a, b]) => (
          <div key={b} className={"tracking-[-0.300px] " + w}>
            <u>{a}</u>
            {b}
          </div>
        ))}
        <svg viewBox="1309 23 56 19" className="ml-auto h-[19px] w-14" fill="none">
          <path d="M1310 24H1326V41H1310ZM1329 24H1345V41H1329ZM1348 24H1364V41H1348Z" fill="#fff" />
          <path d="M1314 36H1320M1333.500 33H1338.500V36.500H1333.500ZM1335.500 32V30.500H1340.500V34.500H1339M1353 30L1359 36M1359 30L1353 36" stroke="#72808e" strokeWidth="1.600" />
        </svg>
      </nav>

      <div className={"flex h-9 shrink-0 items-center pt-[3px] " + barBg}>
        <Grip className="ml-[584px]" />
        <Group className="ml-[9px] w-[281px]" items={["pad*", "pocket*", "shaft", "groove", "hole", "rib", "slot", "stiffener*", "loft", "removeLoft"]} />
        <Grip className="ml-[115px]" />
        <Group className="ml-[9px] w-[195px]" items={["fillet*", "chamfer", "draft*", "shell", "thick", "thread", "replace*"]} />
        <Grip className="ml-[14px]" />
        <Group className="ml-[9px] w-[79px]" items={["point", "line", "plane"]} />
      </div>
      <div className="h-[2px] shrink-0 border-t border-[#5c5c66] bg-[#a8a8b4]" />

      <main className="flex h-[626px] shrink-0 bg-[#333366]">
        <div className="flex w-[18px] shrink-0 flex-col border-r border-l-2 border-l-[#9a9aa8] border-r-[#2a2a58]">
          <div className="flex h-4 items-center justify-center border-b border-[#2c2c70] bg-[#7b7bff]">
            <svg viewBox="0 0 10 10" className="size-[10px]"><path d="M5 0L10 10H0Z" /></svg>
          </div>
          <div className={"h-4 " + hatchBg} />
          <div className="flex-1 border-t border-[#b8b8ff] bg-[#7b7bff]" />
          <div className={"h-[151px] " + hatchBg} />
          <div className="flex h-[17px] items-center justify-center border-t border-[#b8b8ff] bg-[#7b7bff]">
            <svg viewBox="0 0 10 10" className="size-[10px]"><path d="M5 10L10 0H0Z" /></svg>
          </div>
        </div>
        <div className="-mt-px -ml-px flex h-[627px] w-[303px] shrink-0 flex-col overflow-hidden text-[11px] whitespace-nowrap text-white">
          {tree.map((row, i) => (
            <TreeRow key={i} row={row} />
          ))}
          <div className="ml-[6px] h-4 w-[2px] shrink-0 bg-white" />
        </div>
        <Scene />
        <aside className="flex w-[37px] shrink-0 flex-col bg-[linear-gradient(to_right,#fff_0,#fff_3px,#dcdcee_9px,#cfcfe6_24px,#c8c8de_30px,#a8a8b8_37px)]">
          <HGrip className="mt-[5px]" />
          <div className="flex h-11 items-start pt-[6px] pl-[9px]"><Icon name="gear" /></div>
          <HGrip />
          <div className="mt-[9px] flex flex-col gap-[6px] pl-[9px]">
            <Icon name="grayTree" />
            <Icon name="grayTree2" />
            <Icon name="grayTree3" />
            <Icon name="grayTree4" />
          </div>
          <HGrip className="mt-[34px]" />
          <div className="mt-[9px] pl-[9px]"><Icon name="sketch" menu /></div>
          <HGrip className="mt-[15px]" />
          <div className="mt-3 pl-[9px]"><Icon name="arrow" menu /></div>
          <HGrip className="mt-[10px]" />
          <div className="mt-[11px] pl-[9px]"><Icon name="translate" menu /></div>
          <div className="mt-[6px] ml-[5px] h-[2px] border-t border-[#8c8c9c] bg-white" />
          <div className="mt-[7px] flex flex-col gap-[6px] pl-[9px]">
            <Icon name="mirror" />
            <Icon name="grid" menu />
          </div>
          <div className="mt-[8px] ml-[5px] h-[2px] border-t border-[#8c8c9c] bg-white" />
          <div className="mt-[6px] pl-[9px]"><Icon name="scale" menu /></div>
          <HGrip className="mt-[13px]" />
          <div className="mt-[10px] flex flex-col gap-[6px] pl-[9px]">
            <Icon name="grayDims" />
            <Icon name="dimBox" />
          </div>
          <HGrip className="mt-[10px]" />
          <div className="mt-[9px] flex flex-col gap-[6px] pl-[9px]">
            <Icon name="blockCursor" />
            <Icon name="blockFlash" />
            <Icon name="blockFind" />
          </div>
        </aside>
      </main>

      <div className={"flex h-[37px] shrink-0 items-center border-t border-white pt-[4px] " + barBg}>
        <Grip className="ml-[4px]" />
        <Group className="ml-[9px] w-[306px]" items={["newDoc", "open", "save", "print", "cut", "copy", "paste", "undo*", "redo*", "help", "find"]} />
        <Grip className="ml-[13px]" />
        <Group className="ml-[9px] w-[188px]" items={["formula", "comment", "lamps", "table*", "equiv", "lock*", "relations"]} />
        <Grip className="ml-[13px]" />
        <Group className="ml-[9px] w-[22px]" items={["convert"]} />
        <Grip className="ml-[13px]" />
        <Group className="ml-[8px] w-[78px]" items={["measure", "clamp", "mass"]} />
        <Grip className="ml-[13px]" />
        <Group className="ml-[10px] w-[22px]" items={["camera"]} />
        <Grip className="ml-[13px]" />
        <Group className="ml-[9px] w-[222px]" items={["swirl", "hand", "axis", "dims", "section*", "update", "stack*", "book"]} />
        <div className="ml-[4px] flex h-[22px] w-[164px] shrink-0 items-center border border-[#a8a8ac] bg-[#e1e1e1] pl-[3px] text-[12px] tracking-[-0.400px]">
          PartBody
          <svg viewBox="0 0 10 6" className="mr-1 ml-auto h-[6px] w-[10px]" fill="none" stroke="#444"><path d="M1 1L5 5L9 1" /></svg>
        </div>
        <Grip className="ml-[12px]" />
        <Group className="ml-[8px] w-[107px]" items={["sketchPos", "surface", "target", "beam"]} />
        <Grip className="ml-[13px]" />
        <svg viewBox="0 0 8 8" className="mb-5 ml-[9px] h-2 w-2 shrink-0" fill="none" stroke="#fff">
          <path d="M0 1L3 4L0 7M4 1L7 4L4 7" />
        </svg>
        <svg viewBox="0 0 40 32" className="-mt-1 ml-[7px] h-8 w-10 shrink-0 overflow-visible" fill="none">
          <path d="M8 2Q15 0 18 2Q17 6 12 8Q16 9 12 13" stroke="#d42a2a" strokeWidth="1.800" />
          <path d="M5 12Q13 11 10 17Q8 22 1 22L6 13" stroke="#283a78" strokeWidth="1.800" />
          <path d="M23 9Q16 8 15 12Q16 15 19 16Q18 21 12 20" stroke="#f0a020" strokeWidth="2" />
          <text x="7" y="30" fontFamily="Liberation Sans, sans-serif" fontSize="9.500" fontWeight="bold" fontStyle="italic" textLength="32" lengthAdjust="spacingAndGlyphs" fill="#22306e">CATIA</text>
        </svg>
      </div>

      <footer className="flex h-[25px] shrink-0 items-center border-t border-[#5c5c66] bg-[#cfcfe4] pl-[3px] text-[12px]">
        <span className="tracking-[-0.310px]">Select an object or a command</span>
        <div className="ml-auto h-[20px] w-[300px] border border-[#7a7a84] bg-white" />
        <StatusButton>
          <path d="M2 2.500H9V9H2ZM11 9H13M14.500 1V12.500H2" />
        </StatusButton>
        <div className="w-[3px]" />
        <StatusButton>
          <circle cx="8" cy="6" r="5" />
          <path d="M8 4V9M8 2V3M14.500 1V12.500H2" />
        </StatusButton>
      </footer>
      <div className="flex-1 bg-white" />
    </div>
  );
}
